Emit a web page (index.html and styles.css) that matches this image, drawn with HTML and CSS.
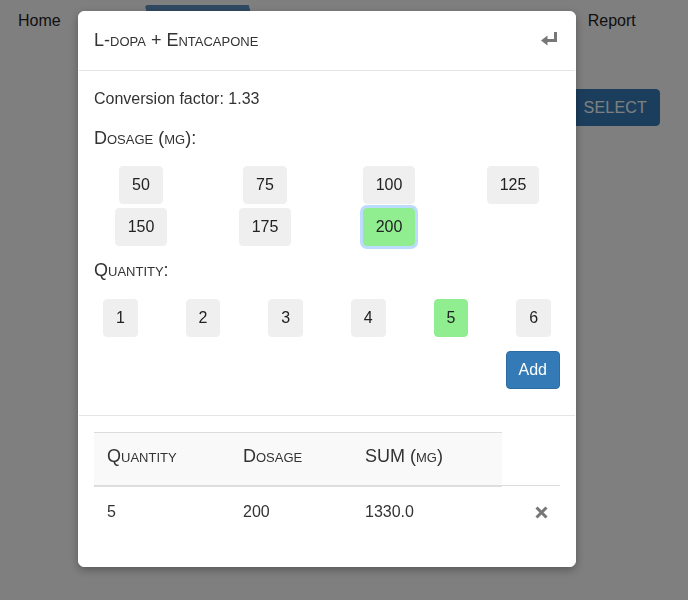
FILE: index.html
```html
<!DOCTYPE html>
<html lang="en">
<head>
<meta charset="utf-8">
<title>L-dopa + Entacapone</title>
<link rel="stylesheet" href="styles.css">
</head>
<body>
<nav class="nav">
  <a class="nav-link">Home</a>
  <span class="nav-tab"></span>
  <a class="nav-link nav-report">Report</a>
</nav>
<div class="page-actions">
  <button class="btn-select">Select</button>
</div>
<div class="backdrop"></div>

<div class="modal">
  <div class="modal-header">
    <h4 class="modal-title">L-dopa + Entacapone</h4>
    <button class="icon-btn" aria-label="Back">
      <svg width="16" height="14" viewBox="0 0 16 14"><path d="M13 0h3v10H6.5v3.5L0 8.5 6.5 3.5V7H13z" fill="#777"/></svg>
    </button>
  </div>
  <div class="modal-body">
    <p class="factor">Conversion factor: 1.33</p>
    <p class="label">Dosage (mg):</p>
    <div class="grid grid-4">
      <div class="cell"><button class="opt">50</button></div>
      <div class="cell"><button class="opt">75</button></div>
      <div class="cell"><button class="opt">100</button></div>
      <div class="cell"><button class="opt">125</button></div>
      <div class="cell"><button class="opt">150</button></div>
      <div class="cell"><button class="opt">175</button></div>
      <div class="cell"><button class="opt opt-on opt-focus">200</button></div>
    </div>
    <p class="label label-qty">Quantity:</p>
    <div class="grid grid-6">
      <div class="cell"><button class="opt">1</button></div>
      <div class="cell"><button class="opt">2</button></div>
      <div class="cell"><button class="opt">3</button></div>
      <div class="cell"><button class="opt">4</button></div>
      <div class="cell"><button class="opt opt-on">5</button></div>
      <div class="cell"><button class="opt">6</button></div>
    </div>
    <div class="add-row"><button class="btn-add">Add</button></div>
  </div>
  <div class="modal-footer">
    <table class="tbl">
      <colgroup>
        <col class="c1"><col class="c2"><col class="c3"><col class="c4">
      </colgroup>
      <thead>
        <tr><th>Quantity</th><th>Dosage</th><th>SUM (mg)</th></tr>
      </thead>
      <tbody>
        <tr>
          <td>5</td><td>200</td><td>1330.0</td>
          <td class="td-x"><svg width="13" height="13" viewBox="0 0 13 13"><path d="M1.5 1.5l10 10M11.5 1.5l-10 10" stroke="#777" stroke-width="3"/></svg></td>
        </tr>
      </tbody>
    </table>
  </div>
</div>
</body>
</html>
```
FILE: styles.css
```css
* { box-sizing: border-box; }
html, body { margin: 0; padding: 0; }
body {
  font-family: "Liberation Sans", Arial, sans-serif;
  font-size: 16px;
  line-height: 1.42857;
  color: #333;
  background: #fff;
  height: 600px;
  overflow: hidden;
}
.nav {
  display: flex;
  align-items: flex-start;
  height: 60px;
}
.nav-link {
  color: #222;
  padding-top: 10px;
}
.nav-link:first-child { margin-left: 18px; }
.nav-tab {
  display: block;
  width: 112px;
  height: 30px;
  margin-top: 5px;
  margin-left: 84px;
  background: #6094c6;
  clip-path: polygon(0 0, 104px 0, 112px 100%, 8px 100%);
  border-radius: 3px 3px 0 0;
}
.nav-report { margin-left: 331px; }
.page-actions {
  display: flex;
  justify-content: flex-end;
  padding-top: 29px;
  padding-right: 28px;
}
.btn-select {
  font: inherit;
  text-transform: uppercase;
  color: #fff;
  background: #387dbb;
  border: 1px solid #387dbb;
  border-radius: 4px;
  height: 37px;
  padding: 1px 12px 0 11px;
  letter-spacing: 0.2px;
}
.backdrop {
  position: fixed;
  inset: 0;
  background: rgba(0, 0, 0, 0.5);
}
.modal {
  position: absolute;
  top: 11px;
  left: 78px;
  width: 498px;
  background: #fff;
  border: 1px solid #fff;
  border-radius: 6px;
  box-shadow: 0 3px 9px rgba(0, 0, 0, 0.3);
}
.modal-header {
  display: flex;
  align-items: center;
  justify-content: space-between;
  padding: 15px 18px 17px 15px;
  border-bottom: 1px solid #e5e5e5;
}
.modal-title {
  margin: 0;
  font-size: 18px;
  font-weight: normal;
  font-variant: small-caps;
  line-height: 26px;
  color: #333;
}
.icon-btn {
  border: 0;
  padding: 0;
  background: none;
  display: flex;
  margin-top: -2px;
}
.modal-body { padding: 17px 15px 15px; }
.factor { margin: 0 0 14px; }
.label {
  margin: 0 0 15px;
  font-size: 18px;
  font-variant: small-caps;
  line-height: 26px;
}
.label-qty { margin-top: 11px; margin-bottom: 16px; }
.grid {
  display: grid;
  margin: 0 -15px;
  row-gap: 4px;
}
.grid-4 { grid-template-columns: repeat(4, 1fr); }
.grid-6 { grid-template-columns: repeat(6, 1fr); }
.cell { display: flex; justify-content: center; }
.opt {
  font: inherit;
  line-height: 24px;
  color: #222;
  background: #efefef;
  border: 1px solid #efefef;
  border-radius: 4px;
  padding: 6px 12px;
}
.opt-on { background: #90ee90; border-color: #90ee90; }
.opt-focus { box-shadow: 0 0 0 3px #bcdcfd; }
.add-row {
  display: flex;
  justify-content: flex-end;
  margin-top: 14px;
  margin-bottom: 11px;
}
.btn-add {
  font: inherit;
  line-height: 24px;
  color: #fff;
  background: #337ab7;
  border: 1px solid #2e6da4;
  border-radius: 4px;
  padding: 6px 12px;
}
.modal-footer {
  border-top: 1px solid #e5e5e5;
  padding: 16px 15px 15px;
}
.tbl {
  width: 100%;
  border-collapse: collapse;
  table-layout: fixed;
  margin-bottom: 15px;
}
.c1 { width: 136px; }
.c2 { width: 122px; }
.c3 { width: 150px; }
.c4 { width: 58px; }
.tbl th {
  text-align: left;
  font-weight: normal;
  font-size: 18px;
  font-variant: small-caps;
  line-height: 26px;
  padding: 10px 13px 16px;
  background: #f9f9f9;
  border-top: 1px solid #ddd;
  border-bottom: 2px solid #ddd;
}
.tbl td {
  padding: 13px;
  border-top: 1px solid #ddd;
  line-height: 23px;
}
.tbl .td-x { text-align: right; padding-right: 12px; }
.td-x svg { vertical-align: middle; }
```
